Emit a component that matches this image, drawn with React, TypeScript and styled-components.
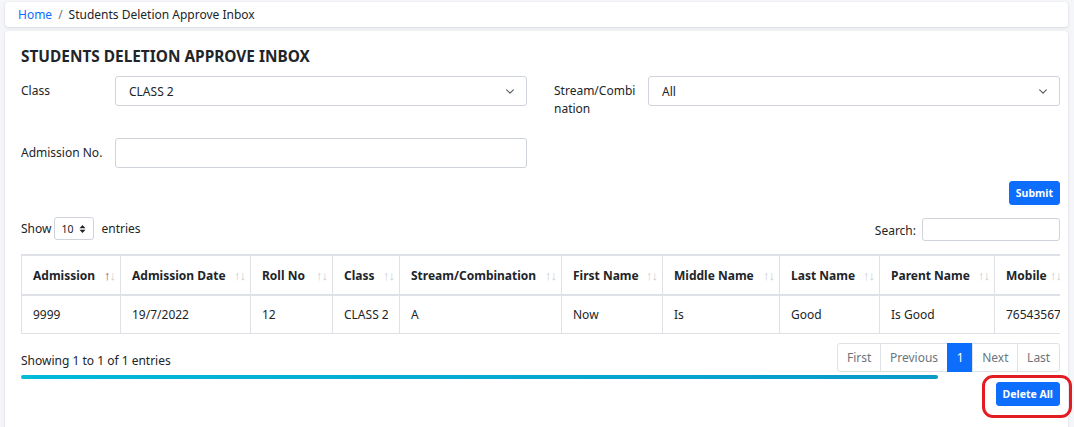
import React from "react";
import styled, { createGlobalStyle } from "styled-components";

const GlobalStyle = createGlobalStyle`
    * { box-sizing: border-box; }
    body {
        margin: 0;
        background-color: #f4f6f9;
        font-family: "Noto Sans", "Open Sans", sans-serif;
        font-size: 12px;
        color: #212529;
    }
`

const Page = styled.div`
    padding: 2px 6px 0 5px;
    height: 427px;
    overflow: hidden;
`

const Breadcrumb = styled.nav`
    display: flex;
    align-items: center;
    height: 25px;
    padding: 0 13px;
    background-color: #fff;
    border-radius: 3px;
    box-shadow: 0 0 1px rgba(0, 0, 0, .13), 0 1px 3px rgba(0, 0, 0, .1);

    a {
        color: #0d6efd;
        text-decoration: none;
    }
`

const Separator = styled.span`
    color: #6c757d;
    padding: 0 6px;
`

const Card = styled.div`
    margin-top: 4px;
    background-color: #fff;
    border-radius: 3px;
    box-shadow: 0 0 1px rgba(0, 0, 0, .13), 0 1px 3px rgba(0, 0, 0, .1);
    padding: 16px 8px 30px 16px;
    min-height: 400px;
`

const Title = styled.h5`
    margin: 0 0 9px 0;
    font-size: 15.4px;
    font-weight: 700;
    line-height: 20px;
    color: #212529;
`

const FormRow = styled.div<{ $mb: number }>`
    display: grid;
    grid-template-columns: 1fr 1fr;
    column-gap: 27px;
    margin-bottom: ${(p) => p.$mb}px;
`

const FormGroup = styled.div`
    display: flex;
    align-items: flex-start;
`

const Label = styled.label`
    width: 94px;
    flex-shrink: 0;
    padding-top: 6px;
    line-height: 18px;
`

const chevron = `url("data:image/svg+xml,%3csvg xmlns='http://www.w3.org/2000/svg' viewBox='0 0 16 16'%3e%3cpath fill='none' stroke='%23555a60' stroke-linecap='round' stroke-linejoin='round' stroke-width='2' d='m2 5 6 6 6-6'/%3e%3c/svg%3e")`

const Select = styled.select`
    flex: 1;
    height: 30px;
    padding: 0 28px 0 13px;
    font-family: inherit;
    font-size: 12px;
    color: #212529;
    background-color: #fff;
    background-image: ${chevron};
    background-repeat: no-repeat;
    background-position: right 10px center;
    background-size: 12px 9px;
    border: 1px solid #ced4da;
    border-radius: 3px;
    appearance: none;
`

const TextInput = styled.input`
    flex: 1;
    height: 30px;
    padding: 0 10px;
    font-family: inherit;
    font-size: 12px;
    border: 1px solid #ced4da;
    border-radius: 3px;
`

const ButtonRow = styled.div`
    display: flex;
    justify-content: flex-end;
`

const Button = styled.button`
    height: 24px;
    padding: 0 6px;
    font-family: inherit;
    font-size: 10.5px;
    font-weight: 700;
    color: #fff;
    background-color: #0d6efd;
    border: 1px solid #0d6efd;
    border-radius: 3px;
`

const TableControls = styled.div`
    display: flex;
    justify-content: space-between;
    align-items: center;
    margin-top: 13px;
    height: 23px;
`

const LengthControl = styled.div`
    display: flex;
    align-items: center;
    gap: 3px;
    margin-top: -2px;
`

const SmallSelect = styled.div`
    display: flex;
    align-items: center;
    gap: 6px;
    width: 40px;
    height: 23px;
    padding-left: 6px;
    margin: 0 4px 0 0;
    border: 1px solid #ced4da;
    border-radius: 3px;
    font-size: 10.5px;
`

const SearchControl = styled.label`
    display: flex;
    align-items: center;
    gap: 6px;
    padding-top: 2px;

    input {
        width: 138px;
        height: 23px;
        border: 1px solid #ced4da;
        border-radius: 3px;
        margin-top: -2px;
    }
`

const TableWrap = styled.div`
    margin-top: 13px;
    width: 1039px;
    overflow: hidden;
`

const Table = styled.table`
    border-collapse: collapse;
    table-layout: fixed;
    width: 1045px;
`

const Th = styled.th`
    position: relative;
    height: 40px;
    padding: 0 22px 0 11px;
    text-align: left;
    font-weight: 700;
    font-size: 12px;
    white-space: nowrap;
    border: 1px solid #dee2e6;
    border-top: 2px solid #dee2e6;
    border-bottom: 2px solid #dee2e6;
`

const SortIcon = styled.span<{ $active?: boolean }>`
    position: absolute;
    right: 5px;
    top: 10px;
    font-size: 13px;
    font-weight: 400;
    letter-spacing: -1px;
    color: #c8ccd1;

    b {
        font-weight: 400;
        color: ${(p) => (p.$active ? "#7a4a62" : "#c8ccd1")};
    }
`

const Td = styled.td`
    height: 38px;
    padding: 0 11px;
    white-space: nowrap;
    border: 1px solid #dee2e6;
`

const TableFooter = styled.div`
    display: flex;
    justify-content: space-between;
    align-items: center;
    margin-top: 9px;
`

const Info = styled.span`
    padding-top: 6px;
`

const Pagination = styled.ul`
    display: flex;
    list-style: none;
    margin: 0;
    padding: 0;
`

const PageItem = styled.li<{ $active?: boolean }>`
    height: 29px;
    line-height: 27px;
    padding: 0 8.8px;
    color: ${(p) => (p.$active ? "#fff" : "#6c757d")};
    background-color: ${(p) => (p.$active ? "#0d6efd" : "#fff")};
    border: 1px solid ${(p) => (p.$active ? "#0d6efd" : "#dee2e6")};
    margin-left: -1px;

    &:first-child {
        border-radius: 3px 0 0 3px;
    }
    &:last-child {
        border-radius: 0 3px 3px 0;
    }
`

const ScrollBar = styled.div`
    margin-top: 3px;
    width: 917px;
    height: 4px;
    border-radius: 2px;
    background: linear-gradient(90deg, #00bad9, #0a99c9);
`

const DeleteRow = styled.div`
    display: flex;
    justify-content: flex-end;
    margin-top: 3px;
`

const Highlight = styled.div`
    position: relative;

    &::after {
        content: "";
        position: absolute;
        left: -14px;
        top: -7px;
        right: -12px;
        bottom: -12px;
        border: 3px solid #e31b23;
        border-radius: 11px;
    }
`

const columns = [
    { name: "Admission", width: 99, active: true },
    { name: "Admission Date", width: 130 },
    { name: "Roll No", width: 82 },
    { name: "Class", width: 67 },
    { name: "Stream/Combination", width: 162 },
    { name: "First Name", width: 101 },
    { name: "Middle Name", width: 117 },
    { name: "Last Name", width: 100 },
    { name: "Parent Name", width: 115 },
    { name: "Mobile", width: 72 },
]

const row = ["9999", "19/7/2022", "12", "CLASS 2", "A", "Now", "Is", "Good", "Is Good", "7654356791"]

function UpDown() {
    return (
        <svg width="7" height="10" viewBox="0 0 7 10">
            <path d="M3.5 1 6.5 4.3H.5z M3.5 9 6.5 5.7H.5z" fill="#212529" />
        </svg>
    )
}

export default function App() {
    return (
        <Page>
            <GlobalStyle />
            <Breadcrumb>
                <a href="#">Home</a>
                <Separator>/</Separator>
                <span>Students Deletion Approve Inbox</span>
            </Breadcrumb>

            <Card>
                <Title>STUDENTS DELETION APPROVE INBOX</Title>

                <FormRow $mb={20}>
                    <FormGroup>
                        <Label>Class</Label>
                        <Select defaultValue="2">
                            <option value="2">CLASS 2</option>
                        </Select>
                    </FormGroup>
                    <FormGroup>
                        <Label>Stream/Combi<br />nation</Label>
                        <Select defaultValue="all">
                            <option value="all">All</option>
                        </Select>
                    </FormGroup>
                </FormRow>

                <FormRow $mb={13}>
                    <FormGroup>
                        <Label>Admission No.</Label>
                        <TextInput type="text" />
                    </FormGroup>
                </FormRow>

                <ButtonRow>
                    <Button>Submit</Button>
                </ButtonRow>

                <TableControls>
                    <LengthControl>
                        <span>Show</span>
                        <SmallSelect>10 <UpDown /></SmallSelect>
                        <span>entries</span>
                    </LengthControl>
                    <SearchControl>
                        Search:
                        <input type="search" />
                    </SearchControl>
                </TableControls>

                <TableWrap>
                    <Table>
                        <colgroup>
                            {columns.map((c) => (
                                <col key={c.name} style={{ width: c.width }} />
                            ))}
                        </colgroup>
                        <thead>
                            <tr>
                                {columns.map((c) => (
                                    <Th key={c.name}>
                                        {c.name}
                                        <SortIcon $active={c.active}><b>↑</b>↓</SortIcon>
                                    </Th>
                                ))}
                            </tr>
                        </thead>
                        <tbody>
                            <tr>
                                {row.map((v, i) => (
                                    <Td key={i}>{v}</Td>
                                ))}
                            </tr>
                        </tbody>
                    </Table>
                </TableWrap>

                <TableFooter>
                    <Info>Showing 1 to 1 of 1 entries</Info>
                    <Pagination>
                        <PageItem>First</PageItem>
                        <PageItem>Previous</PageItem>
                        <PageItem $active>1</PageItem>
                        <PageItem>Next</PageItem>
                        <PageItem>Last</PageItem>
                    </Pagination>
                </TableFooter>

                <ScrollBar />

                <DeleteRow>
                    <Highlight>
                        <Button>Delete All</Button>
                    </Highlight>
                </DeleteRow>
            </Card>
        </Page>
    )
}
